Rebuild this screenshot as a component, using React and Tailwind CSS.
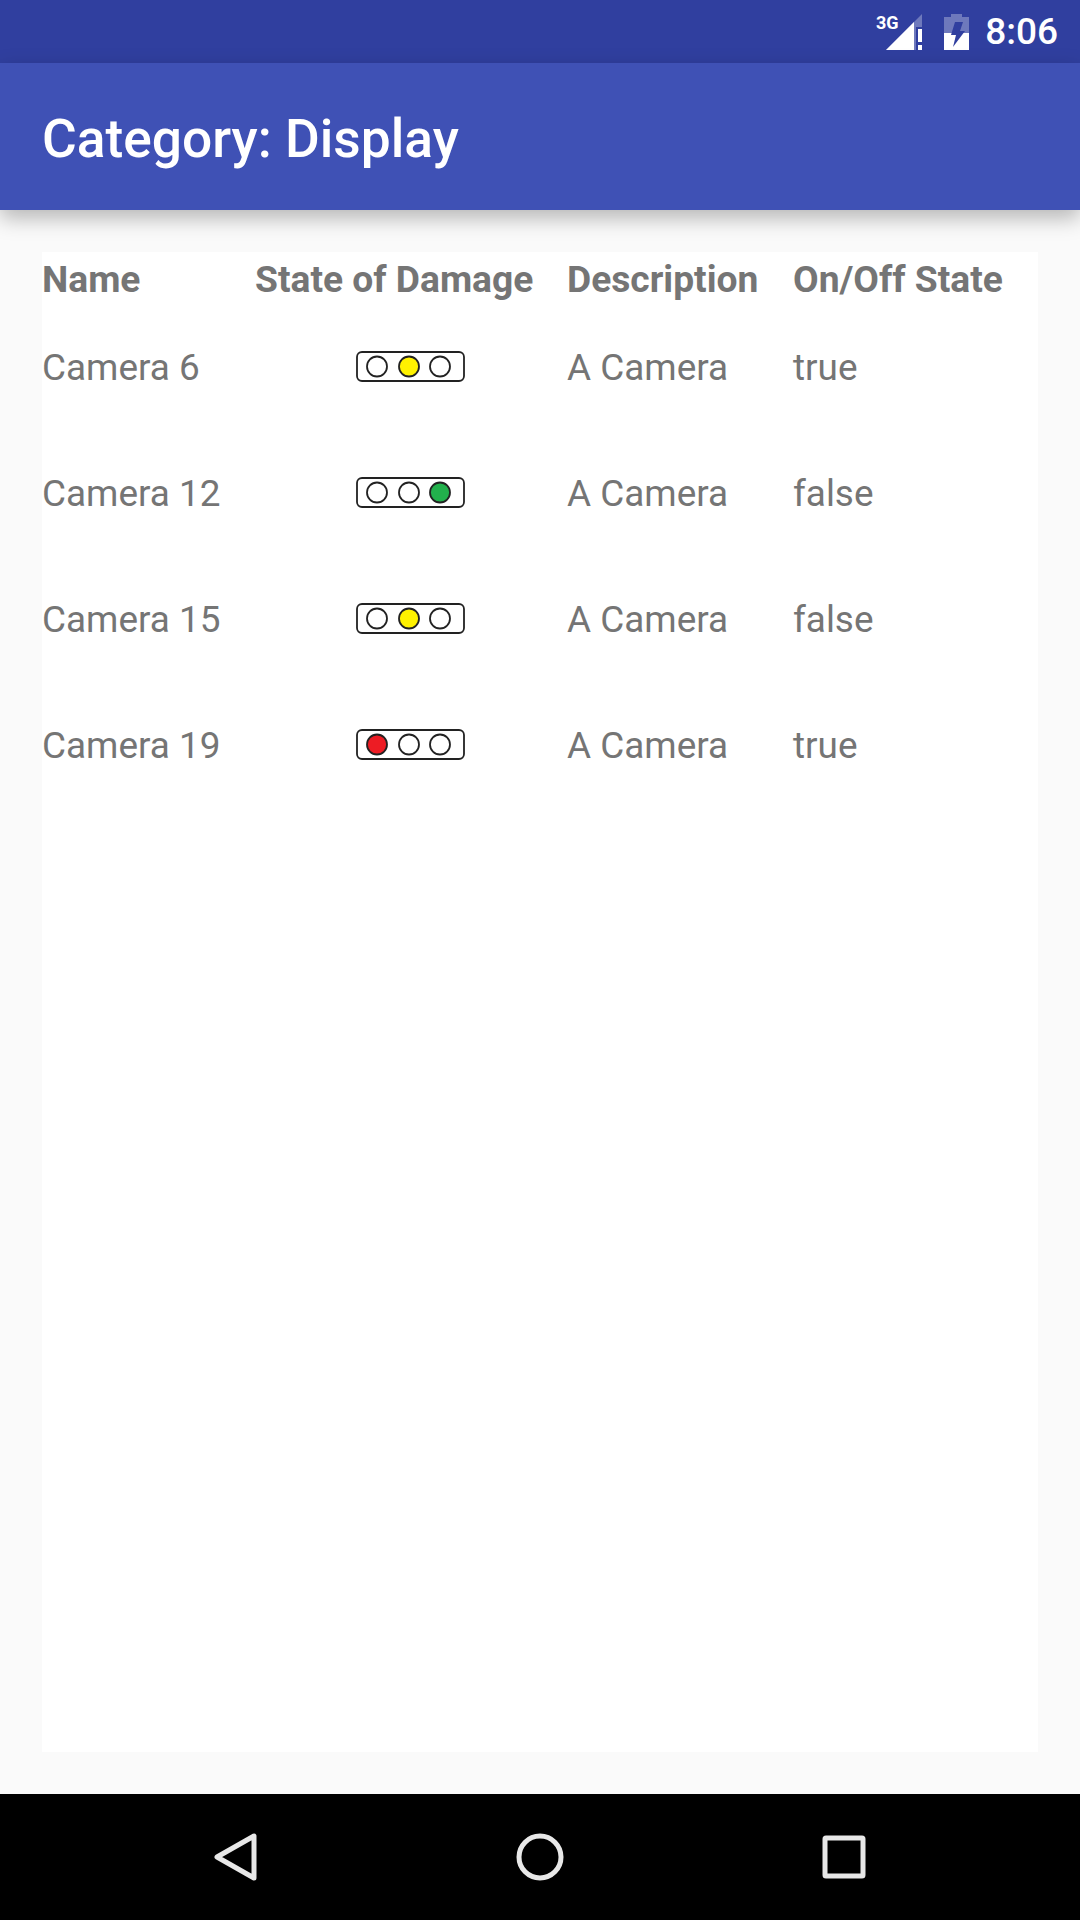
const rows = [
  { name: "Camera 6", lit: 1, on: "true" },
  { name: "Camera 12", lit: 2, on: "false" },
  { name: "Camera 15", lit: 1, on: "false" },
  { name: "Camera 19", lit: 0, on: "true" },
];

const lampColors = ["#ed1c24", "#fff200", "#22b14c"];

function Lights({ lit }) {
  return (
    <svg width="109" height="31" viewBox="0 0 109 31" className="block">
      <rect x="1" y="1" width="107" height="29" rx="5" fill="#fff" stroke="#222" strokeWidth="1.8" />
      {[21, 53, 84].map((cx, i) => (
        <circle
          key={cx}
          cx={cx}
          cy="15.5"
          r="10"
          fill={i === lit ? lampColors[i] : "#fff"}
          stroke="#222"
          strokeWidth="1.8"
        />
      ))}
    </svg>
  );
}

function StatusBar() {
  return (
    <div className="h-[63px] bg-[#303f9f] flex items-center justify-end pr-[22px] relative">
      <span className="absolute left-[876px] top-[12px] text-[18px] leading-[22px] font-bold text-white">3G</span>
      <svg width="36" height="36" viewBox="0 0 36 36" className="mr-[22px]">
        <path d="M36 0V36H0Z" fill="#fff" fillOpacity="0.3" />
        <path d="M28 8V36H0Z" fill="#fff" />
        <rect x="30" y="0" width="6" height="36" fill="#303f9f" />
        <path d="M36 0V13H30V6Z" fill="#fff" fillOpacity="0.3" />
        <rect x="32" y="15" width="4" height="13" fill="#fff" />
        <rect x="32" y="31" width="4" height="5" fill="#fff" />
      </svg>
      <svg width="25" height="36" viewBox="0 0 25 36" className="mr-[16px]">
        <path d="M7 0H18V3H25V36H0V3H7Z" fill="#fff" fillOpacity="0.3" />
        <path d="M0 19H25V36H0Z" fill="#fff" />
        <path d="M11 8H19L16 17H21L9 33L12 21H7Z" fill="#303f9f" />
      </svg>
      <span className="text-[37px] leading-[63px] font-medium text-white">8:06</span>
    </div>
  );
}

export default function App() {
  return (
    <div className="w-[1080px] h-[1920px] flex flex-col bg-[#fafafa] overflow-hidden font-['Roboto',sans-serif]">
      <StatusBar />
      <div className="h-[147px] bg-[#3f51b5] flex items-center pl-[42px] pt-[6px] shadow-[0_8px_20px_rgba(0,0,0,0.28)] relative">
        <span className="text-[53.3px] font-medium text-white leading-none">Category: Display</span>
      </div>
      <div className="flex-1 p-[42px]">
        <div className="h-full bg-white text-[36.9px] text-[#757575]">
          <div className="grid grid-cols-[213px_312px_226px_1fr] h-[52px] items-center font-bold text-[37.2px]">
            <span>Name</span>
            <span>State of Damage</span>
            <span>Description</span>
            <span>On/Off State</span>
          </div>
          {rows.map((row) => (
            <div key={row.name} className="grid grid-cols-[213px_312px_226px_1fr] h-[126px] items-center pt-[2px]">
              <span>{row.name}</span>
              <div className="pl-[101px] mt-[-4px]">
                <Lights lit={row.lit} />
              </div>
              <span>A Camera</span>
              <span>{row.on}</span>
            </div>
          ))}
        </div>
      </div>
      <div className="h-[126px] bg-black flex items-center justify-center gap-[258px] text-[#e8e8e8]">
        <svg width="44" height="48" viewBox="0 0 44 48" fill="none" stroke="currentColor" strokeWidth="5" strokeLinejoin="round">
          <path d="M40 3V45L3 24Z" />
        </svg>
        <svg width="48" height="48" viewBox="0 0 48 48" fill="none" stroke="currentColor" strokeWidth="5">
          <circle cx="24" cy="24" r="21" />
        </svg>
        <svg width="44" height="44" viewBox="0 0 44 44" fill="none" stroke="currentColor" strokeWidth="5" strokeLinejoin="round">
          <rect x="3" y="3" width="38" height="38" rx="1" />
        </svg>
      </div>
    </div>
  );
}
